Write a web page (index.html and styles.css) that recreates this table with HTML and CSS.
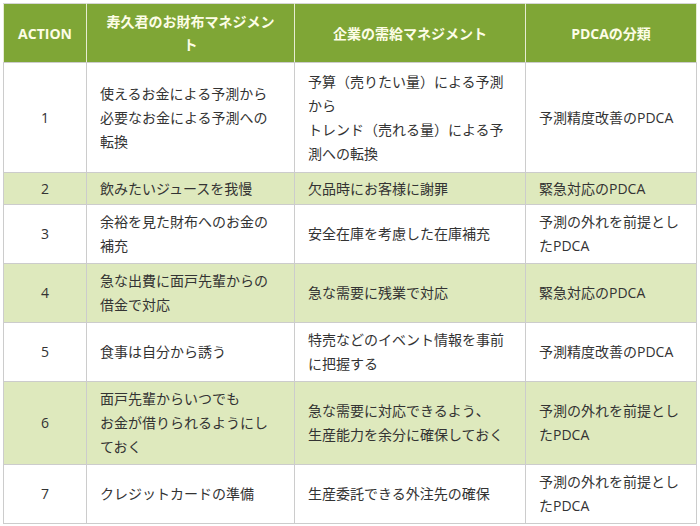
FILE: index.html
```html
<!DOCTYPE html>
<html lang="ja">
<head>
<meta charset="utf-8">
<link rel="stylesheet" href="styles.css">
</head>
<body>
<table class="tbl">
  <colgroup>
    <col class="c1"><col class="c2"><col class="c3"><col class="c4">
  </colgroup>
  <thead>
    <tr class="h">
      <th>ACTION</th>
      <th>寿久君のお財布マネジメント</th>
      <th>企業の需給マネジメント</th>
      <th>PDCAの分類</th>
    </tr>
  </thead>
  <tbody>
    <tr class="r4">
      <td class="num">1</td>
      <td>使えるお金による予測から<br>必要なお金による予測への転換</td>
      <td>予算（売りたい量）による予測から<br>トレンド（売れる量）による予測への転換</td>
      <td>予測精度改善のPDCA</td>
    </tr>
    <tr class="r1 alt">
      <td class="num">2</td>
      <td>飲みたいジュースを我慢</td>
      <td>欠品時にお客様に謝罪</td>
      <td>緊急対応のPDCA</td>
    </tr>
    <tr class="r2">
      <td class="num">3</td>
      <td>余裕を見た財布へのお金の補充</td>
      <td>安全在庫を考慮した在庫補充</td>
      <td>予測の外れを前提としたPDCA</td>
    </tr>
    <tr class="r2 alt">
      <td class="num">4</td>
      <td>急な出費に面戸先輩からの借金で対応</td>
      <td>急な需要に残業で対応</td>
      <td>緊急対応のPDCA</td>
    </tr>
    <tr class="r2">
      <td class="num">5</td>
      <td>食事は自分から誘う</td>
      <td>特売などのイベント情報を事前に把握する</td>
      <td>予測精度改善のPDCA</td>
    </tr>
    <tr class="r3 alt">
      <td class="num">6</td>
      <td>面戸先輩からいつでも<br>お金が借りられるようにしておく</td>
      <td>急な需要に対応できるよう、<br>生産能力を余分に確保しておく</td>
      <td>予測の外れを前提としたPDCA</td>
    </tr>
    <tr class="r2">
      <td class="num">7</td>
      <td>クレジットカードの準備</td>
      <td>生産委託できる外注先の確保</td>
      <td>予測の外れを前提としたPDCA</td>
    </tr>
  </tbody>
</table>
</body>
</html>
```

FILE: styles.css
```css
html, body {
  margin: 0;
  padding: 0;
  background: #ffffff;
}
body {
  padding: 3px;
  font-family: "Open Sans", "Noto Sans CJK JP", sans-serif;
  font-size: 14px;
  color: #333333;
}
.tbl {
  border-collapse: collapse;
  table-layout: fixed;
  width: 693px;
  line-height: 24px;
}
.c1 { width: 83px; }
.c2 { width: 208px; }
.c3 { width: 231px; }
.c4 { width: 171px; }

.tbl th,
.tbl td {
  border: 1px solid #cccccc;
  padding: 0 13px;
  vertical-align: middle;
  text-align: left;
}
.tbl th {
  background: #7fa636;
  color: #fdfde6;
  font-weight: bold;
  text-align: center;
  line-height: 23px;
  border-left-color: #e6ecd2;
  border-right-color: #e6ecd2;
  border-top-color: #d6d6d6;
}
.tbl td.num {
  text-align: center;
}
.tbl tr.alt td {
  background: #dee9bd;
}
.h { height: 59px; }
.r1 { height: 32px; }
.r2 { height: 59px; }
.r3 { height: 83px; }
.r4 { height: 110px; }
```
